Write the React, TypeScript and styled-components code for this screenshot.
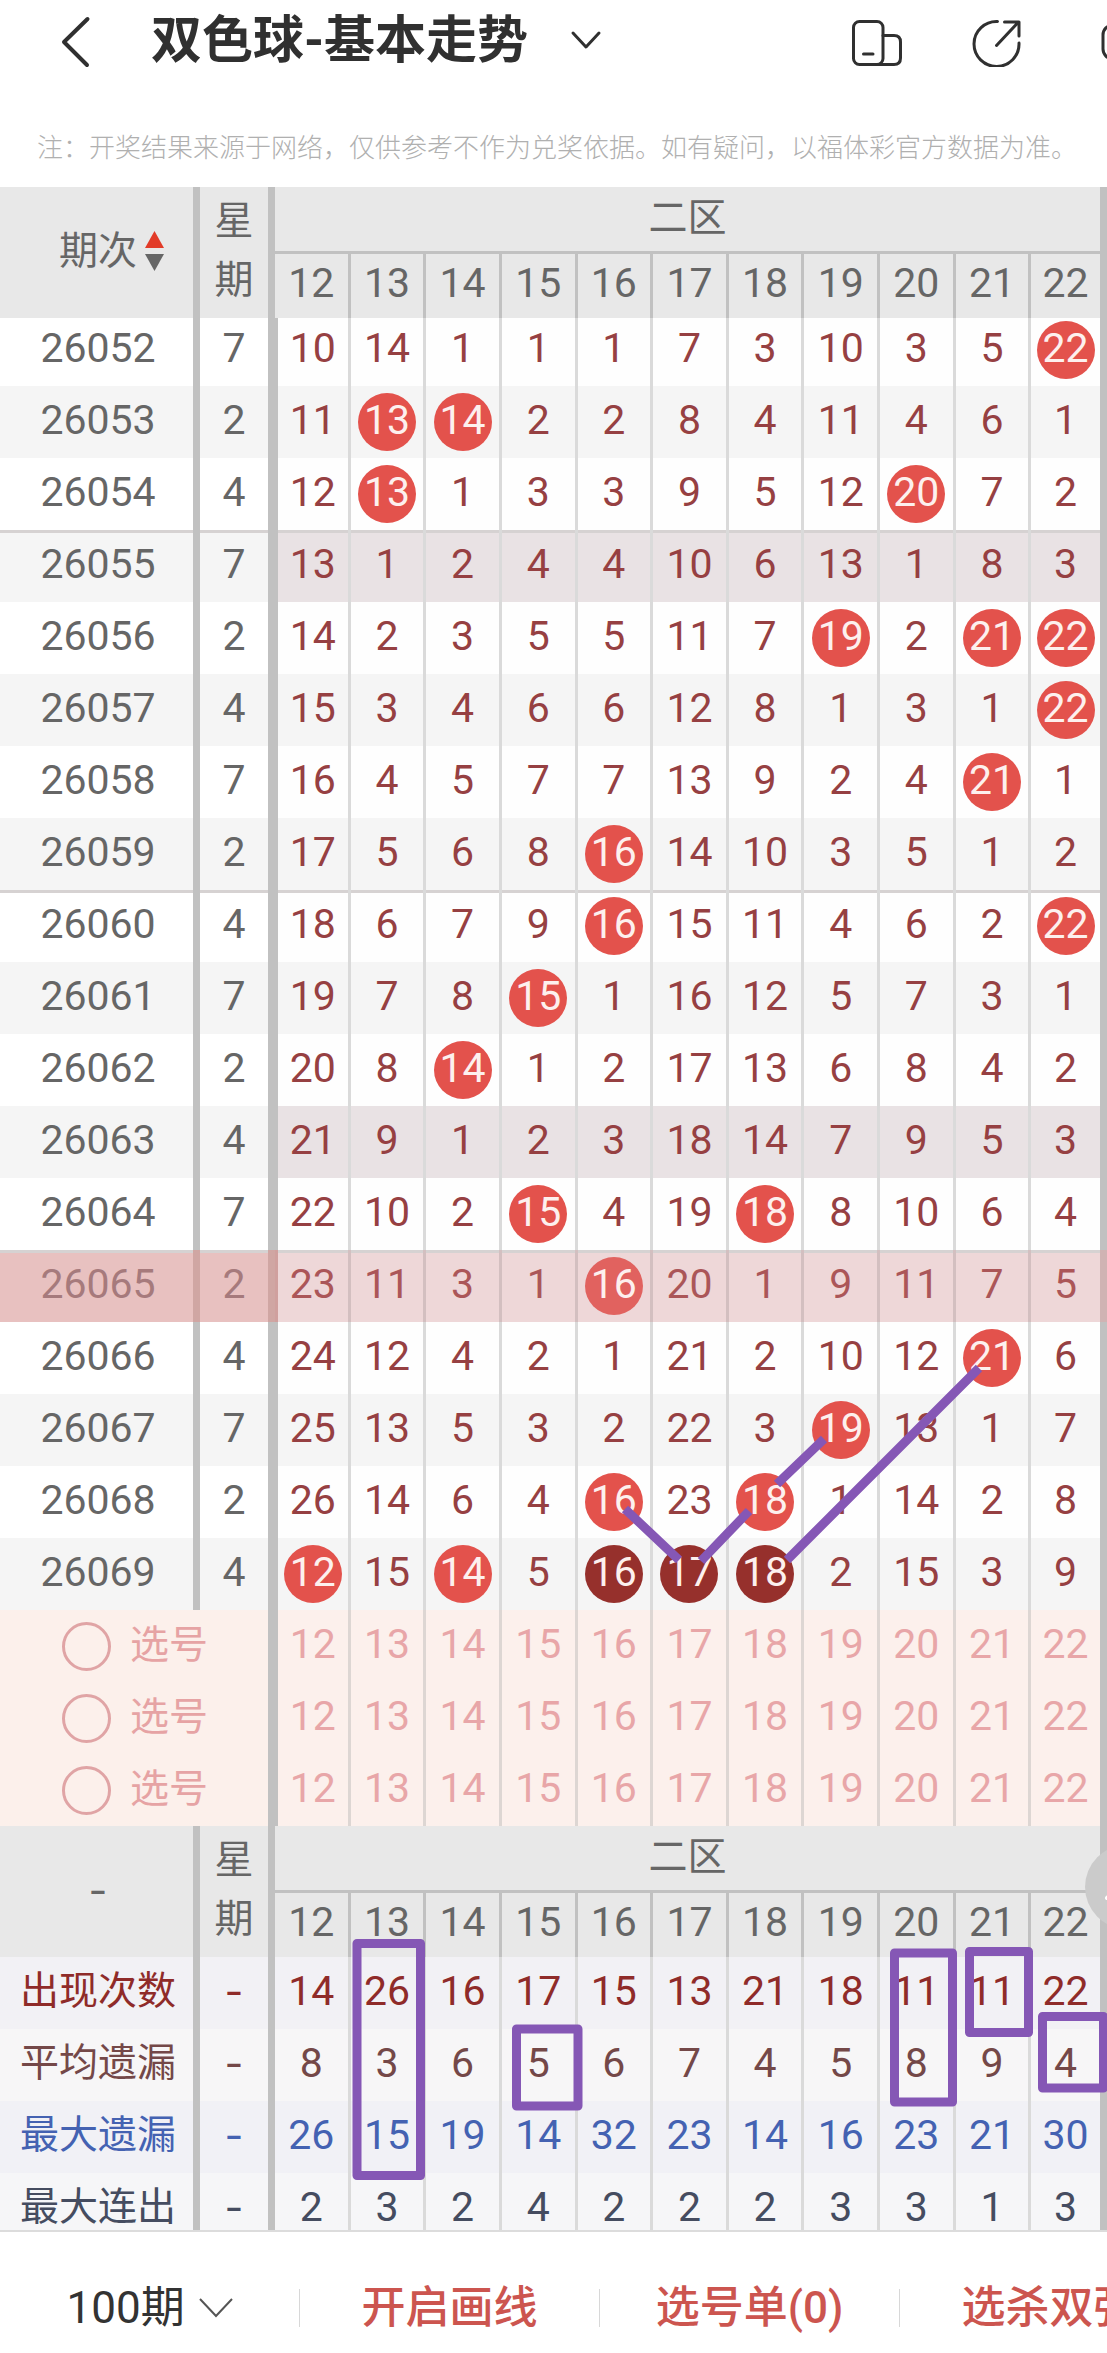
import React from "react";
import styled, { createGlobalStyle, css } from "styled-components";

const GlobalStyle = createGlobalStyle`
  * { box-sizing: border-box; }
  body {
    margin: 0;
    background: #fff;
    overflow-x: hidden;
    font-family: Roboto, "Noto Sans CJK SC", sans-serif;
  }
  button, select { font: inherit; color: inherit; background: none; border: 0; padding: 0; margin: 0; }
`;

const Page = styled.div`
  position: relative;
  width: 100%;
  overflow: hidden;
  background: #fff;
`;

const TopBar = styled.header`
  display: flex;
  align-items: center;
  height: 84px;
  padding-left: 56px;
  color: #303030;
`;

const IconButton = styled.button`
  display: flex;
  flex: none;
  align-items: center;
  justify-content: center;
  svg { display: block; }
`;

const Title = styled.h1`
  margin: 0 0 0 55px;
  font-size: 51px;
  font-weight: 700;
  line-height: 76px;
  padding-bottom: 2px;
  white-space: nowrap;
`;

const Actions = styled.div`
  display: flex;
  flex: none;
  gap: 70px;
  margin-left: auto;
  margin-right: -43px;
`;

const Notice = styled.p`
  margin: 0;
  padding: 44px 0 19px 7px;
  font-size: 26px;
  line-height: 40px;
  font-weight: 300;
  text-align: center;
  white-space: nowrap;
  color: #b0b0b0;
`;

const Chart = styled.main`
  position: relative;
  border-bottom: 2px solid #dcdcdc;
`;

const Table = styled.table`
  width: 100%;
  table-layout: fixed;
  border-collapse: separate;
  border-spacing: 0;
  text-align: center;
  color: #666;
  font-size: 41px;
  font-weight: 400;

  th, td { padding: 0; font-weight: 400; }
`;

const PeriodCol = styled.col`
  width: 200px;
`;

const WeekCol = styled.col`
  width: 75px;
`;

const headCell = css`
  background: #e8e8e8;
  border-right: 7px solid #c1c1c1;
`;

const HeadCell = styled.th`
  ${headCell}
  font-size: 39px;

  && { padding: 0 0 3px 3px; }
`;

const WeekHead = styled.th`
  ${headCell}
  font-size: 39px;
  line-height: 59px;

  && { padding: 0 12px 3px; }
`;

const ZoneHead = styled.th`
  ${headCell}
  height: 67px;
  border-bottom: 3px solid #c1c1c1;
  font-size: 39px;
  line-height: 58px;

  && { padding-bottom: 2px; }
`;

const NumberHead = styled.th`
  height: 64px;
  background: #e8e8e8;
  border-right: 3px solid #c1c1c1;
  line-height: 58px;

  &:last-child { border-right-width: 7px; }
  && { padding-bottom: 6px; }
`;

const SortButton = styled.button`
  display: inline-flex;
  align-items: center;
  gap: 8px;
  padding-left: 27px;
  line-height: 58px;
  svg { display: block; }
`;

const Dash = styled.span`
  font-family: Inter, sans-serif;
  font-size: 41px;
`;

type Tone = "plain" | "striped" | "tinted" | "marked";

const sideTone = { plain: "#fff", striped: "#f5f5f5", tinted: "#f5f5f5", marked: "#e8c1c0" };
const cellTone = { plain: "#fefefe", striped: "#f5f5f5", tinted: "#e9e2e4", marked: "#eed7d8" };

const SideCell = styled.td<{ $tone: Tone }>`
  background: ${(p) => sideTone[p.$tone]};
  border-right: 7px solid ${(p) => (p.$tone === "marked" ? "#d0a6a3" : "#c1c1c1")};
  color: ${(p) => (p.$tone === "marked" ? "#a67a7c" : "#666")};

  &&:first-child { padding-left: 3px; }
`;

const NumberCell = styled.td<{ $tone: Tone }>`
  background: ${(p) => cellTone[p.$tone]};
  border-right: 3px solid ${(p) => (p.$tone === "marked" ? "#d3bfc0" : "#dadada")};
  color: ${(p) => (p.$tone === "marked" ? "#ab5658" : "#964042")};

  &:nth-child(3) { border-left: 3px solid ${(p) => (p.$tone === "marked" ? "#d0a09e" : "#c1c1c1")}; }
  &:last-child { border-right: 7px solid ${(p) => (p.$tone === "marked" ? "#d0b3b3" : "#c1c1c1")}; }
`;

const DrawRow = styled.tr<{ $ruled: boolean }>`
  height: 72px;
  &:first-child { height: 68px; }
  &:first-child td { padding-bottom: 4px; }
  ${(p) => p.$ruled && css`td { box-shadow: inset 0 3px 0 #d6d2d2; }`}
`;

const Mark = styled.span<{ $fill?: string }>`
  display: flex;
  align-items: center;
  justify-content: center;
  width: 58px;
  height: 58px;
  margin: 0 auto;
  padding-bottom: 4px;
  border-radius: 50%;
  line-height: 54px;
  ${(p) => p.$fill && css`
    background: ${p.$fill};
    color: #fdf0ee;
  `}
`;

const SideText = styled.span`
  display: block;
  height: 58px;
  line-height: 54px;
`;

const PickRow = styled.tr`
  height: 72px;
`;

const PickHead = styled.td`
  background: #fcf0eb;
  border-right: 7px solid #c1c1c1;
  color: #e6a3a4;
  font-size: 39px;
`;

const PickLabel = styled.label`
  display: flex;
  align-items: center;
  gap: 19px;
  padding-left: 62px;
  line-height: 54px;
`;

const PickText = styled.span`
  padding-bottom: 3px;
`;

const PickRadio = styled.input`
  appearance: none;
  width: 49px;
  height: 49px;
  margin: 0;
  border: 3px solid #e0a4a5;
  border-radius: 50%;

  &:checked { box-shadow: inset 0 0 0 8px #fcf0eb; background: #e0a4a5; }
`;

const PickCell = styled.td`
  background: #fcf0ec;
  border-right: 3px solid #ddd6d3;
  color: #e8a6a8;

  &:nth-child(2) { border-left: 3px solid #c1c1c1; }
  &:last-child { border-right: 7px solid #c1c1c1; }
`;

const StatRow = styled.tr<{ $color: string; $shade: string }>`
  height: 72px;
  color: ${(p) => p.$color};
  td, th { background: ${(p) => p.$shade}; }
  && > th { padding-left: 3px; }

  &:last-child { height: 57px; vertical-align: top; }
  &:last-child span { height: 46px; line-height: 46px; padding: 0; }
  &:last-child td, &:last-child th { padding-top: 11px; }
`;

const StatHead = styled.th`
  border-right: 7px solid #c1c1c1;
  font-size: 39px;
  white-space: nowrap;
`;

const StatWeek = styled.td`
  border-right: 7px solid #c1c1c1;
`;

const StatCell = styled.td`
  border-right: 3px solid #dadada;
  &:last-child { border-right: 7px solid #c1c1c1; }
`;

const Annotations = styled.svg`
  position: absolute;
  inset: 0;
  width: 100%;
  height: 100%;
  pointer-events: none;
  fill: none;
  stroke: #8557b5;
  stroke-width: 9px;
`;

const FloatButton = styled.button`
  position: absolute;
  right: -62px;
  bottom: 301px;
  width: 84px;
  height: 84px;
  && { background: #cbcbcb; }
  border-radius: 50%;
  display: flex;
  align-items: center;
  justify-content: center;
`;

const BottomBar = styled.footer`
  display: flex;
  height: 121px;
  padding-top: 30px;
  align-items: center;
  font-size: 44px;
  line-height: 60px;
  overflow: hidden;
`;

const Tool = styled.div`
  display: flex;
  flex: 0 0 300px;
  align-items: center;
  justify-content: center;
  height: 38px;
  border-right: 1px solid #d8d8d8;
  color: #333;
`;

const PeriodSelect = styled.select`
  appearance: none;
  width: 118px;
  outline: none;
`;

const SelectBox = styled.label`
  display: flex;
  align-items: center;
  gap: 14px;
`;

const ToolButton = styled.button`
  color: #cc554f;
  font-weight: 500;
  white-space: nowrap;
`;

const columns = [12, 13, 14, 15, 16, 17, 18, 19, 20, 21, 22];

const RED = "#e3524c";
const DARK = "#96302c";

interface Draw {
  week: number;
  values: number[];
  hits: number[];
  tone?: Tone;
}

const draws: Draw[] = [
  { week: 7, values: [10, 14, 1, 1, 1, 7, 3, 10, 3, 5, 22], hits: [22] },
  { week: 2, values: [11, 13, 14, 2, 2, 8, 4, 11, 4, 6, 1], hits: [13, 14] },
  { week: 4, values: [12, 13, 1, 3, 3, 9, 5, 12, 20, 7, 2], hits: [13, 20] },
  { week: 7, values: [13, 1, 2, 4, 4, 10, 6, 13, 1, 8, 3], hits: [], tone: "tinted" },
  { week: 2, values: [14, 2, 3, 5, 5, 11, 7, 19, 2, 21, 22], hits: [19, 21, 22] },
  { week: 4, values: [15, 3, 4, 6, 6, 12, 8, 1, 3, 1, 22], hits: [22] },
  { week: 7, values: [16, 4, 5, 7, 7, 13, 9, 2, 4, 21, 1], hits: [21] },
  { week: 2, values: [17, 5, 6, 8, 16, 14, 10, 3, 5, 1, 2], hits: [16] },
  { week: 4, values: [18, 6, 7, 9, 16, 15, 11, 4, 6, 2, 22], hits: [16, 22] },
  { week: 7, values: [19, 7, 8, 15, 1, 16, 12, 5, 7, 3, 1], hits: [15] },
  { week: 2, values: [20, 8, 14, 1, 2, 17, 13, 6, 8, 4, 2], hits: [14] },
  { week: 4, values: [21, 9, 1, 2, 3, 18, 14, 7, 9, 5, 3], hits: [], tone: "tinted" },
  { week: 7, values: [22, 10, 2, 15, 4, 19, 18, 8, 10, 6, 4], hits: [15, 18] },
  { week: 2, values: [23, 11, 3, 1, 16, 20, 1, 9, 11, 7, 5], hits: [16], tone: "marked" },
  { week: 4, values: [24, 12, 4, 2, 1, 21, 2, 10, 12, 21, 6], hits: [21] },
  { week: 7, values: [25, 13, 5, 3, 2, 22, 3, 19, 13, 1, 7], hits: [19] },
  { week: 2, values: [26, 14, 6, 4, 16, 23, 18, 1, 14, 2, 8], hits: [16, 18] },
  { week: 4, values: [12, 15, 14, 5, 16, 17, 18, 2, 15, 3, 9], hits: [12, 14, 16, 17, 18] },
];

const stats = [
  { name: "出现次数", color: "#8f2b29", shade: "#f2f1f5", values: [14, 26, 16, 17, 15, 13, 21, 18, 11, 11, 22] },
  { name: "平均遗漏", color: "#744848", shade: "#f7f6f7", values: [8, 3, 6, 5, 6, 7, 4, 5, 8, 9, 4] },
  { name: "最大遗漏", color: "#4462b2", shade: "#f1f1f6", values: [26, 15, 19, 14, 32, 23, 14, 16, 23, 21, 30] },
  { name: "最大连出", color: "#454c60", shade: "#f6f6f8", values: [2, 3, 2, 4, 2, 2, 2, 3, 3, 1, 3] },
];

function hitFill(row: number, column: number, tone: Tone) {
  if (row === draws.length - 1 && column >= 16 && column <= 18) return DARK;
  return tone === "marked" ? "#e1625f" : RED;
}

function HeaderRows({ children }: { children: React.ReactNode }) {
  return (
    <>
      <tr>
        <HeadCell rowSpan={2}>{children}</HeadCell>
        <WeekHead rowSpan={2}>星期</WeekHead>
        <ZoneHead colSpan={11}>二区</ZoneHead>
      </tr>
      <tr>
        {columns.map((c) => (
          <NumberHead key={c}>{c}</NumberHead>
        ))}
      </tr>
    </>
  );
}

export default function App() {
  return (
    <Page>
      <GlobalStyle />
      <TopBar>
        <IconButton aria-label="返回">
          <svg width="40" height="56" viewBox="0 0 40 56" fill="none" stroke="currentColor" strokeWidth="4" strokeLinecap="round" strokeLinejoin="round">
            <path d="M31.500 5L8 28L31 51" />
          </svg>
        </IconButton>
        <Title>双色球-基本走势</Title>
        <IconButton aria-label="切换走势">
          <svg width="116" height="24" viewBox="0 0 116 24" fill="none" stroke="currentColor" strokeWidth="3" strokeLinecap="round" strokeLinejoin="round">
            <path d="M45 3L58 17L71 3" />
          </svg>
        </IconButton>
        <Actions>
          <IconButton aria-label="横屏">
            <svg width="50" height="50" viewBox="0 0 50 50" fill="none" stroke="currentColor" strokeWidth="3" strokeLinecap="round">
              <rect x="1.500" y="4.500" width="29.500" height="43" rx="6" />
              <path d="M31 18.500H42Q48.500 18.500 48.500 25V41Q48.500 47.500 42 47.500H25M11.500 37H21" />
            </svg>
          </IconButton>
          <IconButton aria-label="分享">
            <svg width="50" height="50" viewBox="0 0 50 50" fill="none" stroke="currentColor" strokeWidth="3" strokeLinecap="round" strokeLinejoin="round">
              <path d="M25.500 4.500A22.500 22.500 0 1 0 47 26M24.500 28.500L46 5.500M32.500 5H47V19" />
            </svg>
          </IconButton>
          <IconButton aria-label="设置">
            <svg width="58" height="50" viewBox="0 0 58 50" fill="none" stroke="currentColor" strokeWidth="3">
              <rect x="11" y="8" width="42" height="34" rx="10" />
            </svg>
          </IconButton>
        </Actions>
      </TopBar>

      <Notice>注：开奖结果来源于网络，仅供参考不作为兑奖依据。如有疑问，以福体彩官方数据为准。</Notice>

      <Chart>
        <Table>
          <colgroup>
            <PeriodCol />
            <WeekCol />
            {columns.map((c) => (
              <col key={c} />
            ))}
          </colgroup>
          <thead>
            <HeaderRows>
              <SortButton>
                期次
                <svg width="19" height="40" viewBox="0 0 19 40">
                  <path d="M0 17L9.500 0L19 17Z" fill="#e23b28" />
                  <path d="M0 23H19L9.500 40Z" fill="#666" />
                </svg>
              </SortButton>
            </HeaderRows>
          </thead>
          <tbody>
            {draws.map((draw, row) => {
              const tone: Tone = draw.tone ?? (row % 2 ? "striped" : "plain");
              return (
                <DrawRow key={row} $ruled={row % 5 === 3}>
                  <SideCell $tone={tone}>
                    <SideText>{26052 + row}</SideText>
                  </SideCell>
                  <SideCell $tone={tone}>
                    <SideText>{draw.week}</SideText>
                  </SideCell>
                  {columns.map((c, i) => (
                    <NumberCell key={c} $tone={tone}>
                      <Mark $fill={draw.hits.includes(c) ? hitFill(row, c, tone) : undefined}>{draw.values[i]}</Mark>
                    </NumberCell>
                  ))}
                </DrawRow>
              );
            })}
          </tbody>
          <tbody>
            {[1, 2, 3].map((n) => (
              <PickRow key={n}>
                <PickHead colSpan={2}>
                  <PickLabel>
                    <PickRadio type="radio" name="pick" />
                    <PickText>选号</PickText>
                  </PickLabel>
                </PickHead>
                {columns.map((c) => (
                  <PickCell key={c}>
                    <Mark>{c}</Mark>
                  </PickCell>
                ))}
              </PickRow>
            ))}
          </tbody>
          <tbody>
            <HeaderRows>
              <Dash>-</Dash>
            </HeaderRows>
          </tbody>
          <tbody>
            {stats.map((s) => (
              <StatRow key={s.name} $color={s.color} $shade={s.shade}>
                <StatHead scope="row">
                  <SideText>{s.name}</SideText>
                </StatHead>
                <StatWeek>
                  <SideText as={Dash}>-</SideText>
                </StatWeek>
                {columns.map((c, i) => (
                  <StatCell key={c}>
                    <Mark>{s.values[i]}</Mark>
                  </StatCell>
                ))}
              </StatRow>
            ))}
          </tbody>
        </Table>
        <FloatButton aria-label="回到最新">
          <svg width="44" height="44" viewBox="0 0 44 44" fill="none" stroke="#fff" strokeWidth="4" strokeLinecap="round">
            <path d="M2 33L22 13L42 33" />
          </svg>
        </FloatButton>
        <Annotations viewBox="0 187 1107 2043" preserveAspectRatio="none">
          <path d="M625 1509L679 1560M701 1561L749 1511M777 1484L824 1439M787 1560L979 1368" />
          <g strokeLinejoin="round">
            <rect x="357" y="1943.500" width="63.500" height="232" />
            <rect x="516.500" y="2029" width="61.500" height="77" />
            <rect x="894.500" y="1953" width="58" height="149" />
            <rect x="969.500" y="1951.500" width="59" height="81" />
            <rect x="1042.500" y="2016.500" width="61" height="71.500" />
          </g>
        </Annotations>
      </Chart>

      <BottomBar>
        <Tool>
          <SelectBox>
            <PeriodSelect aria-label="期数" defaultValue="100">
              <option value="100">100期</option>
              <option value="50">50期</option>
              <option value="30">30期</option>
            </PeriodSelect>
            <svg width="34" height="20" viewBox="0 0 34 20" fill="none" stroke="#555" strokeWidth="2">
              <path d="M1 1L17 18L33 1" />
            </svg>
          </SelectBox>
        </Tool>
        <Tool>
          <ToolButton>开启画线</ToolButton>
        </Tool>
        <Tool>
          <ToolButton>选号单(0)</ToolButton>
        </Tool>
        <Tool>
          <ToolButton>选杀双强</ToolButton>
        </Tool>
      </BottomBar>
    </Page>
  );
}
